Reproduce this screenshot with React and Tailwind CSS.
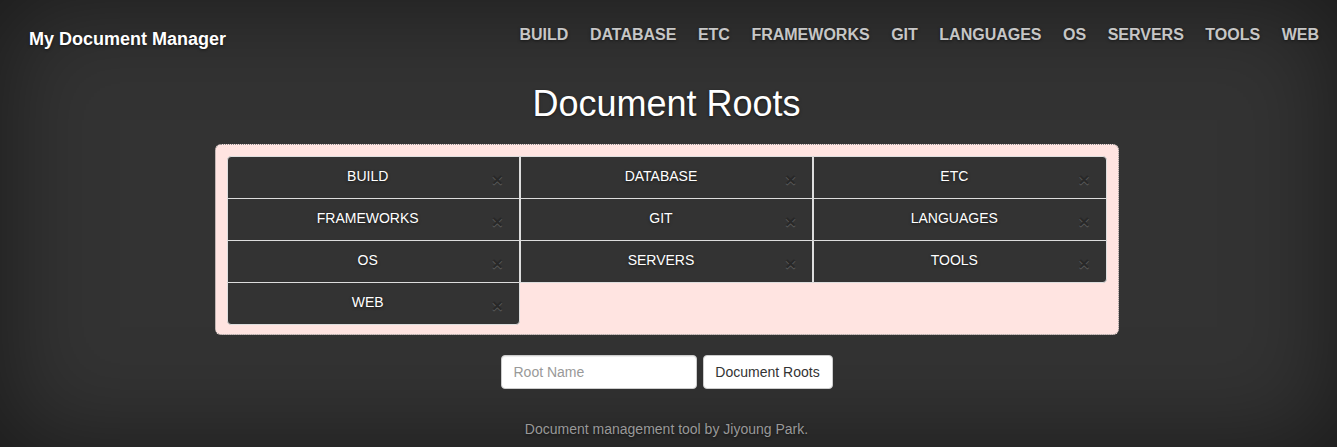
import React from 'react';

const roots = ['BUILD', 'DATABASE', 'ETC', 'FRAMEWORKS', 'GIT', 'LANGUAGES', 'OS', 'SERVERS', 'TOOLS', 'WEB'];

const font = { fontFamily: '"Liberation Sans", Arial, sans-serif' };

const App = () => {
  return (
    <div
      style={font}
      className="h-[447px] overflow-hidden bg-[#333] text-white shadow-[inset_0_0_100px_rgba(0,0,0,0.5)] [text-shadow:0_1px_3px_rgba(0,0,0,0.5)]"
    >
      {/* masthead */}
      <header className="flex justify-between items-start pt-[25px] pl-[29px] pr-[18px]">
        <h3 className="mt-[4px] text-[18px] leading-[20px] font-bold">My Document Manager</h3>
        <nav className="flex gap-[21.5px]">
          {roots.map((r) => (
            <a key={r} href="#" className="text-[16px] leading-[20px] font-bold text-white/75">
              {r}
            </a>
          ))}
        </nav>
      </header>

      <main className="flex flex-col items-center pr-[4px]">
        <h1 className="mt-[35px] text-[36px] leading-[40px] font-normal">Document Roots</h1>

        <div className="mt-[20px] w-[904px] rounded-[6px] border border-dotted border-[#888] bg-[#ffe4e1] px-[11px] pt-[11px] pb-[10px]">
          <div className="grid grid-cols-3">
            {roots.map((r, i) => (
              <div
                key={r}
                className={
                  'relative -mb-px flex h-[43px] items-center justify-center border border-[#ddd] bg-[#333] pr-[11px] pb-[2px] text-[14px] ' +
                  (i === 0 ? 'rounded-tl-[4px] ' : '') +
                  (i === 2 ? 'rounded-tr-[4px] ' : '') +
                  (i === 9 ? 'rounded-bl-[4px] rounded-br-[4px] ' : '') +
                  (i === 8 ? 'rounded-br-[4px] ' : '')
                }
              >
                {r}
                <span className="absolute right-[16px] top-[13px] text-[19px] leading-[19px] font-bold text-black opacity-20 [text-shadow:0_1px_0_#fff]">
                  ×
                </span>
              </div>
            ))}
          </div>
        </div>

        <form className="mt-[20px] flex gap-[6px]" onSubmit={(e) => e.preventDefault()}>
          <input
            type="text"
            placeholder="Root Name"
            className="h-[34px] w-[196px] rounded-[4px] border border-[#ccc] bg-white px-[12px] text-[14px] text-[#555] placeholder:text-[#999] [text-shadow:none] shadow-[inset_0_1px_1px_rgba(0,0,0,0.075)] outline-none"
          />
          <button
            type="submit"
            className="h-[34px] w-[130px] rounded-[4px] border border-[#ccc] bg-white text-[14px] text-[#333]"
          >
            Document Roots
          </button>
        </form>

        <footer className="mt-[30px] text-[14px] leading-[20px] text-[#999]">
          Document management tool by Jiyoung Park.
        </footer>
      </main>
    </div>
  );
};

export default App;
